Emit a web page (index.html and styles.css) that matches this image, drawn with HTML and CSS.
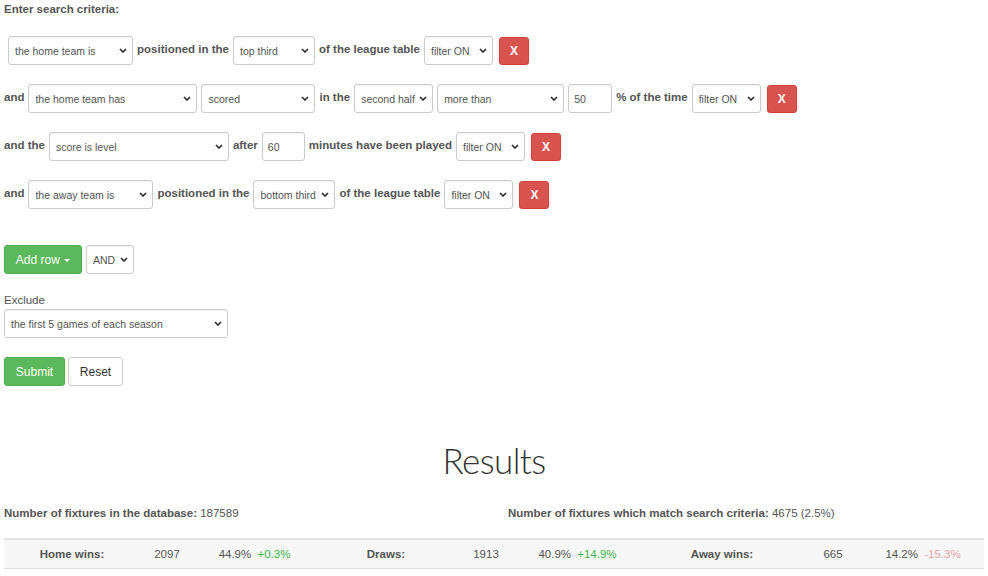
FILE: index.html
```html
<!DOCTYPE html>
<html lang="en">
<head>
<meta charset="utf-8">
<title>Search criteria</title>
<link rel="stylesheet" href="styles.css">
</head>
<body>
<div class="page">
  <div class="intro">Enter search criteria:</div>

  <div class="criteria">
    <div class="crit-row">
      <span class="conj"></span>
      <span class="sel w125"><select><option>the home team is</option></select><svg class="chev" viewBox="0 0 8 5"><path d="M1 1 L4 4 L7 1"/></svg></span>
      <span class="lbl">positioned in the</span>
      <span class="sel w82"><select><option>top third</option></select><svg class="chev" viewBox="0 0 8 5"><path d="M1 1 L4 4 L7 1"/></svg></span>
      <span class="lbl">of the league table</span>
      <span class="sel w69"><select><option>filter ON</option></select><svg class="chev" viewBox="0 0 8 5"><path d="M1 1 L4 4 L7 1"/></svg></span>
      <button class="btn-x">X</button>
    </div>

    <div class="crit-row">
      <span class="lbl conj">and</span>
      <span class="sel w169"><select><option>the home team has</option></select><svg class="chev" viewBox="0 0 8 5"><path d="M1 1 L4 4 L7 1"/></svg></span>
      <span class="sel w114"><select><option>scored</option></select><svg class="chev" viewBox="0 0 8 5"><path d="M1 1 L4 4 L7 1"/></svg></span>
      <span class="lbl">in the</span>
      <span class="sel w79"><select><option>second half</option></select><svg class="chev" viewBox="0 0 8 5"><path d="M1 1 L4 4 L7 1"/></svg></span>
      <span class="sel w127"><select><option>more than</option></select><svg class="chev" viewBox="0 0 8 5"><path d="M1 1 L4 4 L7 1"/></svg></span>
      <input class="num w44" type="text" value="50">
      <span class="lbl">% of the time</span>
      <span class="sel w69"><select><option>filter ON</option></select><svg class="chev" viewBox="0 0 8 5"><path d="M1 1 L4 4 L7 1"/></svg></span>
      <button class="btn-x">X</button>
    </div>

    <div class="crit-row">
      <span class="lbl conj">and the</span>
      <span class="sel w180"><select><option>score is level</option></select><svg class="chev" viewBox="0 0 8 5"><path d="M1 1 L4 4 L7 1"/></svg></span>
      <span class="lbl">after</span>
      <input class="num w43" type="text" value="60">
      <span class="lbl">minutes have been played</span>
      <span class="sel w69"><select><option>filter ON</option></select><svg class="chev" viewBox="0 0 8 5"><path d="M1 1 L4 4 L7 1"/></svg></span>
      <button class="btn-x">X</button>
    </div>

    <div class="crit-row">
      <span class="lbl conj">and</span>
      <span class="sel w125"><select><option>the away team is</option></select><svg class="chev" viewBox="0 0 8 5"><path d="M1 1 L4 4 L7 1"/></svg></span>
      <span class="lbl">positioned in the</span>
      <span class="sel w82"><select><option>bottom third</option></select><svg class="chev" viewBox="0 0 8 5"><path d="M1 1 L4 4 L7 1"/></svg></span>
      <span class="lbl">of the league table</span>
      <span class="sel w69"><select><option>filter ON</option></select><svg class="chev" viewBox="0 0 8 5"><path d="M1 1 L4 4 L7 1"/></svg></span>
      <button class="btn-x">X</button>
    </div>
  </div>

  <div class="add-row">
    <button class="btn btn-green btn-add">Add row <span class="caret"></span></button>
    <span class="sel w48"><select><option>AND</option></select><svg class="chev" viewBox="0 0 8 5"><path d="M1 1 L4 4 L7 1"/></svg></span>
  </div>

  <div class="exclude">
    <label class="ex-label">Exclude</label>
    <span class="sel w224"><select><option>the first 5 games of each season</option></select><svg class="chev" viewBox="0 0 8 5"><path d="M1 1 L4 4 L7 1"/></svg></span>
  </div>

  <div class="actions">
    <button class="btn btn-green btn-submit">Submit</button>
    <button class="btn btn-default btn-reset">Reset</button>
  </div>

  <h1 class="results-title">Results</h1>

  <div class="counts">
    <div><b>Number of fixtures in the database:</b> 187589</div>
    <div><b>Number of fixtures which match search criteria:</b> 4675 (2.5%)</div>
  </div>

  <div class="stats">
    <div class="cell label">Home wins:</div>
    <div class="cell">2097</div>
    <div class="cell">44.9% <span class="up">+0.3%</span></div>
    <div class="cell label">Draws:</div>
    <div class="cell">1913</div>
    <div class="cell">40.9% <span class="up">+14.9%</span></div>
    <div class="cell label">Away wins:</div>
    <div class="cell">665</div>
    <div class="cell">14.2% <span class="down">-15.3%</span></div>
  </div>
</div>
</body>
</html>
```

FILE: styles.css
```css
html, body {
  margin: 0;
  padding: 0;
  background: #fff;
}

body {
  font-family: "Liberation Sans", Arial, sans-serif;
  font-size: 11.5px;
  color: #555;
}

.page {
  padding: 0 4px;
}

.intro {
  font-weight: bold;
  padding-top: 2px;
  line-height: 14px;
}

.criteria {
  display: flex;
  flex-direction: column;
  gap: 19px;
  margin-top: 20px;
}

.crit-row {
  display: flex;
  align-items: center;
  gap: 4px;
  height: 29px;
}

.lbl {
  font-weight: bold;
  white-space: nowrap;
  margin-top: -3px;
}

.conj:empty {
  width: 0;
}

.sel {
  display: inline-grid;
  align-items: center;
  height: 29px;
}

.sel select,
.sel .chev {
  grid-area: 1 / 1;
}

.sel select {
  -webkit-appearance: none;
  appearance: none;
  height: 29px;
  width: 100%;
  box-sizing: border-box;
  border: 1px solid #ccc;
  border-radius: 3px;
  background: #fff;
  box-shadow: inset 0 1px 1px rgba(0,0,0,0.06);
  font-family: "Liberation Sans", Arial, sans-serif;
  font-size: 10.5px;
  color: #555;
  padding: 0 12px 0 6px;
  margin: 0;
}

.sel .chev {
  justify-self: end;
  width: 8px;
  height: 5px;
  margin-right: 6px;
  fill: none;
  stroke: #333;
  stroke-width: 1.7;
  pointer-events: none;
}

.w48 { width: 48px; }
.w69 { width: 69px; }
.w79 { width: 79px; }
.w82 { width: 82px; }
.w114 { width: 114px; }
.w125 { width: 125px; }
.w127 { width: 127px; }
.w169 { width: 169px; }
.w180 { width: 180px; }
.w224 { width: 224px; }

.num {
  height: 29px;
  box-sizing: border-box;
  border: 1px solid #ccc;
  border-radius: 3px;
  box-shadow: inset 0 1px 1px rgba(0,0,0,0.06);
  font-family: "Liberation Sans", Arial, sans-serif;
  font-size: 10.5px;
  color: #555;
  padding: 0 5px;
  margin: 0;
}

.w43 { width: 43px; }
.w44 { width: 44px; }

.btn-x {
  width: 30px;
  height: 28px;
  margin-left: 2px;
  border: 1px solid #d43f3a;
  border-radius: 3px;
  background: #d9534f;
  color: #fff;
  font-family: "Liberation Sans", Arial, sans-serif;
  font-weight: bold;
  font-size: 12px;
  padding: 0;
}

.btn {
  height: 29px;
  box-sizing: border-box;
  border-radius: 3px;
  font-family: "Liberation Sans", Arial, sans-serif;
  font-size: 12px;
  padding: 0 10px;
  margin: 0;
}

.btn-green {
  background: #5cb85c;
  border: 1px solid #4cae4c;
  color: #fff;
}

.btn-default {
  background: #fff;
  border: 1px solid #ccc;
  color: #333;
}

.add-row {
  display: flex;
  gap: 4px;
  margin-top: 36px;
}

.btn-add {
  width: 78px;
  padding: 0;
}

.caret {
  display: inline-block;
  width: 0;
  height: 0;
  border-left: 3px solid transparent;
  border-right: 3px solid transparent;
  border-top: 3px solid #fff;
  vertical-align: middle;
  margin-left: 1px;
}

.exclude {
  display: flex;
  flex-direction: column;
  align-items: flex-start;
  margin-top: 19px;
}

.ex-label {
  line-height: 14px;
  margin-bottom: 2px;
}

.actions {
  display: flex;
  gap: 3px;
  margin-top: 19px;
}

.btn-submit { width: 61px; padding: 0; }
.btn-reset { width: 55px; padding: 0; }

.results-title {
  margin: 52px 0 0;
  text-align: center;
  font-family: "Lato", sans-serif;
  font-weight: 300;
  font-size: 35px;
  letter-spacing: -0.6px;
  line-height: 44px;
  color: #333;
}

.counts {
  display: grid;
  grid-template-columns: 504px 1fr;
  margin-top: 24px;
  line-height: 14px;
}

.stats {
  display: grid;
  grid-template-columns: 136px 54px 121px 142px 58px 125px 164px 58px 122px;
  margin-top: 18px;
  width: 980px;
  height: 31px;
  box-sizing: border-box;
  border-top: 2px solid #e3e3e3;
  border-bottom: 1px solid #ddd;
  background: #f7f7f7;
  align-items: center;
}

.cell {
  text-align: center;
  white-space: nowrap;
}

.cell.label {
  font-weight: bold;
}

.up { color: #3cb44b; margin-left: 3px; }
.down { color: #e8a3a6; margin-left: 3px; }
```
